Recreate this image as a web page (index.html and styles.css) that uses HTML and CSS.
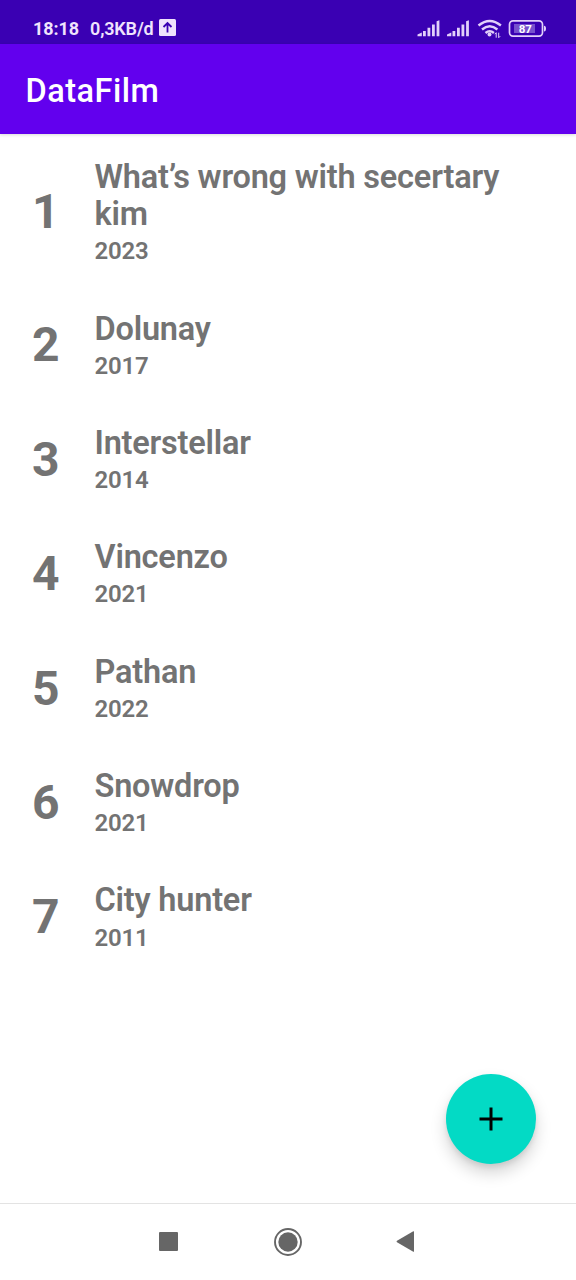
FILE: index.html
```html
<!DOCTYPE html>
<html lang="en">
<head>
<meta charset="utf-8">
<title>DataFilm</title>
<link rel="stylesheet" href="styles.css">
</head>
<body>
<div class="screen">
  <header class="status">
    <span class="clock">18:18</span>
    <span class="speed">0,3KB/d</span>
    <svg class="upload" width="17" height="17" viewBox="0 0 17 17"><rect width="17" height="17" rx="1.5" fill="#efe2fc"/><path d="M8.5 13.5V4.500M4.500 8l4-4 4 4" fill="none" stroke="#3a00b3" stroke-width="1.8"/></svg>
    <svg class="system" width="130" height="20" viewBox="0 0 130 20" fill="#e2d0fa">
      <g id="bars"><path d="M.5 17.200v-1.700l4.300-2v3.700z"/><path d="M6 12h2.800v5.200H6zM10.500 8.700h2.800v8.500h-2.800zM15 5.400h2.800v11.800H15zM19.600 2.200l2.800-1v16h-2.800z"/></g>
      <use href="#bars" x="29.5"/>
      <g fill="none" stroke="#e2d0fa" stroke-width="2.400"><path d="M61.500 6.500q11.200-9.200 22.400 0M65 10.500q7.700-6.500 15.400 0M68.500 14q4.200-3.500 8.400 0"/></g>
      <circle cx="72.500" cy="15.500" r="2"/>
      <path d="M79.200 13.700v5M77.700 15.200l1.500-1.500M81.700 13.700v5l1.500-1.500" fill="none" stroke="#e2d0fa" stroke-width="1"/>
      <rect x="92.500" y="1.900" width="33" height="15.200" rx="3.500" fill="none" stroke="#e2d0fa" stroke-width="1.700"/>
      <rect x="97" y="5" width="21" height="9" fill="#7750cd"/>
      <path d="M127 6.700q2 0 2 2.900t-2 2.900z"/>
      <text class="charge" x="108.300" y="13.500" text-anchor="middle" fill="#fff">87</text>
    </svg>
  </header>
  <div class="appbar"><h1 class="app-title">DataFilm</h1></div>
  <main class="films">
    <div class="film"><span class="rank">1</span><div class="info"><h2 class="name">What’s wrong with secertary kim</h2><p class="year">2023</p></div></div>
    <div class="film"><span class="rank">2</span><div class="info"><h2 class="name">Dolunay</h2><p class="year">2017</p></div></div>
    <div class="film"><span class="rank">3</span><div class="info"><h2 class="name">Interstellar</h2><p class="year">2014</p></div></div>
    <div class="film"><span class="rank">4</span><div class="info"><h2 class="name">Vincenzo</h2><p class="year">2021</p></div></div>
    <div class="film"><span class="rank">5</span><div class="info"><h2 class="name">Pathan</h2><p class="year">2022</p></div></div>
    <div class="film"><span class="rank">6</span><div class="info"><h2 class="name">Snowdrop</h2><p class="year">2021</p></div></div>
    <div class="film"><span class="rank">7</span><div class="info"><h2 class="name">City hunter</h2><p class="year">2011</p></div></div>
  </main>
  <button class="fab" aria-label="Add film"><svg width="24" height="24" viewBox="0 0 24 24"><path d="M12 .5v23M.5 12h23" stroke="#000" stroke-width="3"/></svg></button>
  <nav class="navbar">
    <svg width="19" height="19" viewBox="0 0 19 19"><rect width="19" height="19" rx="1" fill="#666"/></svg>
    <svg width="28" height="28" viewBox="0 0 28 28"><circle cx="14" cy="14" r="13" fill="none" stroke="#666" stroke-width="1.900"/><circle cx="14" cy="14" r="9.700" fill="#666"/></svg>
    <svg width="19" height="21" viewBox="0 0 19 21"><path d="M1 9.800 17.300.3q.7-.3.700.5v19.400q0 .8-.7.500L1 11.200q-1-.7 0-1.400z" fill="#666"/></svg>
  </nav>
</div>
</body>
</html>
```
FILE: styles.css
```css
* { box-sizing: border-box; margin: 0; padding: 0; }
body { font-family: Roboto, "Noto Sans", sans-serif; background: #fff; }
.screen { position: relative; width: 576px; height: 1280px; display: flex; flex-direction: column; overflow: hidden; }
.status { height: 43.5px; flex: none; background: #3a00b3; color: #f0e4fd; display: flex; align-items: center; padding: 13px 29px 0 33px; font-size: 18px; font-weight: 700; }
.clock { width: 57px; letter-spacing: -.1px; }
.speed { width: 69px; font-weight: 600; letter-spacing: -.15px; }
.upload { flex: none; margin-top: -2px; }
.system { flex: none; margin: 1px 0 0 auto; }
.charge { font-size: 11.5px; font-weight: 700; }
.appbar { height: 90px; flex: none; background: #6200ee; color: #fff; display: flex; align-items: center; padding: 5px 25.5px 0; box-shadow: 0 1px 3px rgba(0, 0, 0, .15); }
.app-title { font-size: 32.5px; font-weight: 500; letter-spacing: .5px; }
.films { flex: 1; padding-top: 25.2px; color: #737373; }
.film { display: flex; align-items: center; padding: 0 60px 44.4px 32px; }
.rank { width: 62.5px; font-size: 48px; line-height: 56.2px; font-weight: 700; }
.info { flex: 1; }
.name { font-size: 32.5px; line-height: 37.5px; font-weight: 600; letter-spacing: -.2px; }
.year { font-size: 24px; line-height: 28.1px; font-weight: 600; margin: 3.6px 0 .8px; letter-spacing: -.2px; }
.film:last-child { padding-bottom: 0; }
.fab { position: absolute; right: 40px; bottom: 116.5px; width: 90px; height: 90px; border: 0; border-radius: 50%; background: #03dac5; display: flex; align-items: center; justify-content: center; box-shadow: 0 9px 16px rgba(0, 0, 0, .17), 0 3px 5px rgba(0, 0, 0, .08); }
.navbar { height: 77px; flex: none; border-top: 1px solid #e3e3e3; display: grid; grid-template-columns: repeat(3, 118px); justify-content: center; justify-items: center; align-items: center; padding: 0 1px 1px 0; }
.navbar svg:first-child { margin-right: 3px; }
.navbar svg:last-child { margin-right: 1px; }
```
